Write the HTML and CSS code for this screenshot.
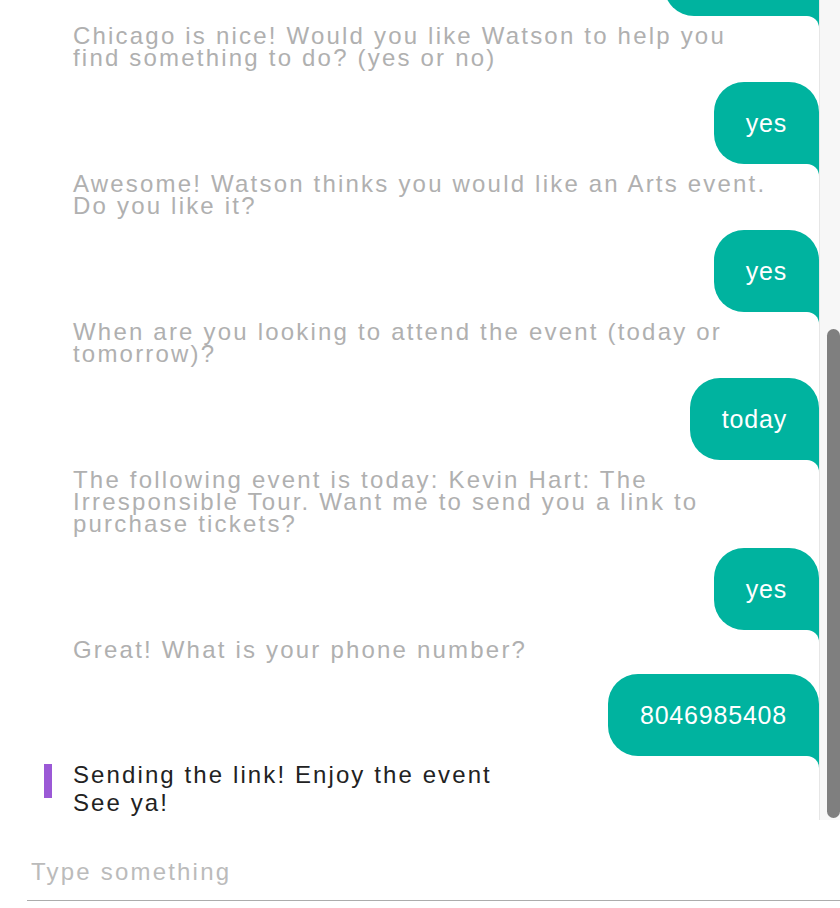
FILE: index.html
```html
<!DOCTYPE html>
<html>
<head>
<meta charset="utf-8">
<link rel="stylesheet" href="styles.css">
</head>
<body>
<div class="chat">
  <div class="viewport">
    <div class="thread">
      <div class="bubble first"></div>
      <p class="bot">Chicago is nice! Would you like Watson to help you find something to do? (yes or no)</p>
      <div class="bubble">yes</div>
      <p class="bot">Awesome! Watson thinks you would like an Arts event. Do you like it?</p>
      <div class="bubble">yes</div>
      <p class="bot">When are you looking to attend the event (today or tomorrow)?</p>
      <div class="bubble">today</div>
      <p class="bot">The following event is today: Kevin Hart: The Irresponsible Tour. Want me to send you a link to purchase tickets?</p>
      <div class="bubble">yes</div>
      <p class="bot">Great! What is your phone number?</p>
      <div class="bubble">8046985408</div>
      <div class="latest">
        <span class="marker"></span>
        <p class="latest-text">Sending the link! Enjoy the event<br>See ya!</p>
      </div>
    </div>
  </div>
  <div class="track">
    <div class="thumb"></div>
  </div>
</div>
<div class="composer">
  <input class="field" type="text" placeholder="Type something">
</div>
</body>
</html>
```

FILE: styles.css
```css
* { box-sizing: border-box; }
html, body {
  margin: 0;
  padding: 0;
  background: #ffffff;
  font-family: "Liberation Sans", Arial, Helvetica, sans-serif;
}
.chat {
  display: flex;
  height: 820px;
}
.viewport {
  flex: 1;
  overflow: hidden;
}
.thread {
  display: flex;
  flex-direction: column;
  margin-top: -66px;
}
.bubble {
  position: relative;
  align-self: flex-end;
  display: flex;
  align-items: center;
  height: 82px;
  padding: 0 32px;
  margin-bottom: 9px;
  background: #00b39f;
  color: #ffffff;
  font-size: 25px;
  letter-spacing: 0.8px;
  border-radius: 30px 30px 0 30px;
}
.bubble.first {
  width: 155px;
}
.bubble::before {
  content: "";
  position: absolute;
  right: 0;
  bottom: -12px;
  width: 12px;
  height: 12px;
  background: #00b39f;
}
.bubble::after {
  content: "";
  position: absolute;
  right: 0;
  bottom: -13px;
  width: 24px;
  height: 13px;
  background: #ffffff;
  border-top-right-radius: 12px;
}
.bot {
  margin: 0 0 13px 73px;
  max-width: 708px;
  color: #b0b0b0;
  font-size: 24px;
  line-height: 22px;
  letter-spacing: 2.2px;
}
.latest {
  display: flex;
  align-items: flex-start;
  gap: 21px;
  margin: -4px 0 0 44px;
}
.marker {
  width: 8px;
  height: 34px;
  margin-top: 3px;
  background: #9b59d6;
  flex: none;
}
.latest-text {
  margin: 0;
  color: #222222;
  font-size: 24px;
  line-height: 28px;
  letter-spacing: 2.1px;
}
.track {
  width: 21px;
  flex: none;
  background: #f7f7f7;
  border-left: 1px solid #e6e6e6;
  padding: 329px 0 2px 7px;
}
.thumb {
  height: 489px;
  background: #7f7f7f;
  border-radius: 7px;
}
.composer {
  padding: 38px 0 0 27px;
}
.field {
  display: block;
  width: 100%;
  border: none;
  border-bottom: 1px solid #acacac;
  padding: 0 0 14px 4px;
  font-family: "Liberation Sans", Arial, Helvetica, sans-serif;
  font-size: 24px;
  letter-spacing: 2.2px;
  color: #222;
  outline: none;
  background: transparent;
}
.field::placeholder {
  color: #bbbbbb;
}
```
